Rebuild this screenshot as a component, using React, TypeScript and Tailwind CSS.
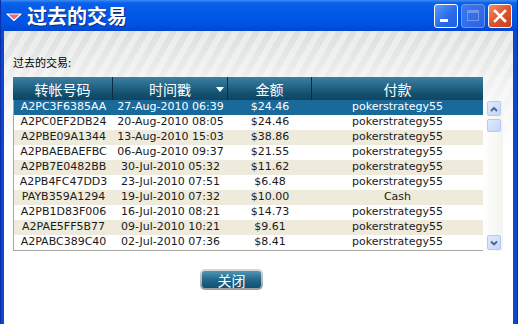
import React from "react"

const rows = [
  ["A2PC3F6385AA", "27-Aug-2010 06:39", "$24.46", "pokerstrategy55"],
  ["A2PC0EF2DB24", "20-Aug-2010 08:05", "$24.46", "pokerstrategy55"],
  ["A2PBE09A1344", "13-Aug-2010 15:03", "$38.86", "pokerstrategy55"],
  ["A2PBAEBAEFBC", "06-Aug-2010 09:37", "$21.55", "pokerstrategy55"],
  ["A2PB7E0482BB", "30-Jul-2010 05:32", "$11.62", "pokerstrategy55"],
  ["A2PB4FC47DD3", "23-Jul-2010 07:51", "$6.48", "pokerstrategy55"],
  ["PAYB359A1294", "19-Jul-2010 07:32", "$10.00", "Cash"],
  ["A2PB1D83F006", "16-Jul-2010 08:21", "$14.73", "pokerstrategy55"],
  ["A2PAE5FF5B77", "09-Jul-2010 10:21", "$9.61", "pokerstrategy55"],
  ["A2PABC389C40", "02-Jul-2010 07:36", "$8.41", "pokerstrategy55"],
]

const cjk = "font-['Noto_Sans_CJK_SC','Noto_Sans',sans-serif]"

function TitleButtons() {
  return (
    <div className="flex gap-[3px] mr-[5px]">
      {/* minimize */}
      <div className="w-[24px] h-[24px] rounded-[3px] border border-white bg-[linear-gradient(135deg,#5a9cfb_0%,#2a6bec_55%,#1e5ee0_100%)] flex items-end pl-[5px] pb-[5px]">
        <div className="w-[8px] h-[3px] bg-white" />
      </div>
      {/* maximize (disabled) */}
      <div className="w-[24px] h-[24px] rounded-[3px] border border-[#6d95ea] bg-[linear-gradient(135deg,#3e7af0_0%,#2a62e2_100%)] flex items-center justify-center">
        <div className="w-[12px] h-[11px] border border-[#6f97ec] border-t-[3px]" />
      </div>
      {/* close */}
      <div className="w-[24px] h-[24px] rounded-[3px] border border-white bg-[linear-gradient(135deg,#f0906c_0%,#e0542c_50%,#c8401c_100%)] flex items-center justify-center">
        <svg width="14" height="14" viewBox="0 0 14 14">
          <path d="M2 2 L12 12 M12 2 L2 12" stroke="#fff" strokeWidth="2.6" strokeLinecap="square" />
        </svg>
      </div>
    </div>
  )
}

function ScrollArrow({ up }: { up?: boolean }) {
  return (
    <div className="w-[14px] h-[15px] rounded-[2px] border border-[#b7c9f2] bg-[linear-gradient(135deg,#e2ebfd_0%,#c2d4f9_100%)] flex items-center justify-center">
      <svg width="8" height="6" viewBox="0 0 8 6">
        <path d={up ? "M1 5 L4 2 L7 5" : "M1 1.5 L4 4.5 L7 1.5"} fill="none" stroke="#4d6185" strokeWidth="1.8" />
      </svg>
    </div>
  )
}

export default function App() {
  return (
    <div className="w-[520px] h-[324px] bg-white overflow-hidden">
      <div className="w-[518px] h-[324px] flex flex-col bg-[#0b47d4] border-l border-r border-[#0a2fa8]">
        {/* title bar */}
        <div className="h-[31px] shrink-0 flex items-center bg-[linear-gradient(to_bottom,#3b8cf6_0px,#0b5fe8_3px,#0058e6_45%,#0052e2_80%,#0045d2_100%)]">
          <svg width="16" height="8" viewBox="0 0 16 8" className="ml-[5px] mt-[2px]">
            <path d="M1 1 L15 1 L8 7.5 Z" fill="#e86a78" stroke="#fff" strokeWidth="1.2" strokeLinejoin="round" />
          </svg>
          <div className={`${cjk} ml-[5px] text-[20px] leading-none font-bold text-white [text-shadow:1px_1px_0_#0a2a80] tracking-[0px]`}>
            过去的交易
          </div>
          <div className="flex-1" />
          <TitleButtons />
        </div>

        {/* content */}
        <div className="flex-1 ml-[3px] mr-[4px] flex flex-col [background:linear-gradient(to_bottom,rgba(255,255,255,0)_0px,rgba(255,255,255,0.55)_50px,#ffffff_120px),repeating-linear-gradient(120deg,#dcdfde_0px,#dcdfde_6px,#e9ecea_6px,#e9ecea_12px)]">
          <div className={`${cjk} ml-[9px] mt-[24px] text-[11px] leading-[14px] text-black`}>过去的交易:</div>

          <div className="ml-[9px] mt-[8px] flex">
            <div className="w-[470px] flex flex-col">
              {/* header */}
              <div className={`${cjk} h-[23px] flex text-white text-[14px] leading-none bg-[linear-gradient(to_bottom,#3f80a0_0%,#24668a_40%,#145271_70%,#0e4561_100%)]`}>
                <div className="w-[100px] flex items-center justify-center border-r border-[#0a2d40]">转帐号码</div>
                <div className="w-[115px] relative flex items-center justify-center border-r border-[#0a2d40]">
                  时间戳
                  <svg width="8" height="5" viewBox="0 0 8 5" className="absolute right-[3px] top-[10px]">
                    <path d="M0 0 L8 0 L4 5 Z" fill="#fff" />
                  </svg>
                </div>
                <div className="w-[84px] flex items-center justify-center border-r border-[#0a2d40]">金额</div>
                <div className="flex-1 flex items-center justify-center">付款</div>
              </div>
              {/* body */}
              <div className="flex flex-col border-l border-b border-[#a9a9a4] font-['DejaVu_Sans',sans-serif] text-[11px]">
                {rows.map((r, i) => (
                  <div
                    key={r[0]}
                    className={`h-[15px] flex items-center ${
                      i === 0 ? "bg-[#19699b] text-white" : i % 2 === 0 ? "bg-[#eeebdc] text-[#1a1a1a]" : "bg-white text-[#1a1a1a]"
                    }`}
                  >
                    <div className="w-[99px] text-center whitespace-nowrap">{r[0]}</div>
                    <div className="w-[115px] text-center whitespace-nowrap">{r[1]}</div>
                    <div className="w-[84px] text-center whitespace-nowrap">{r[2]}</div>
                    <div className="flex-1 text-center whitespace-nowrap">{r[3]}</div>
                  </div>
                ))}
              </div>
            </div>

            {/* scrollbar */}
            <div className="w-[20px] mt-[23px] h-[151px] pl-[4px] pt-[1px] pb-[1px] flex flex-col bg-[linear-gradient(to_right,#ffffff_0%,#f3f3ef_100%)]">
              <ScrollArrow up />
              <div className="mt-[3px] w-[14px] h-[13px] rounded-[2px] border border-[#b7c9f2] bg-[linear-gradient(135deg,#dfe8fd_0%,#c5d6fa_100%)]" />
              <div className="flex-1" />
              <ScrollArrow />
            </div>
          </div>

          {/* close button */}
          <div className="ml-[196px] mt-[18px]">
            <div className="w-[63px] h-[21px] rounded-[5px] bg-[linear-gradient(to_bottom,#d8d8d8_0%,#9c9c9c_100%)] p-[2px]">
              <div className={`${cjk} w-full h-full rounded-[3px] flex items-center justify-center text-white text-[14px] leading-none bg-[linear-gradient(to_bottom,#4e95b5_0%,#22698d_50%,#0f5070_100%)]`}>
                关闭
              </div>
            </div>
          </div>
        </div>
      </div>
    </div>
  )
}
